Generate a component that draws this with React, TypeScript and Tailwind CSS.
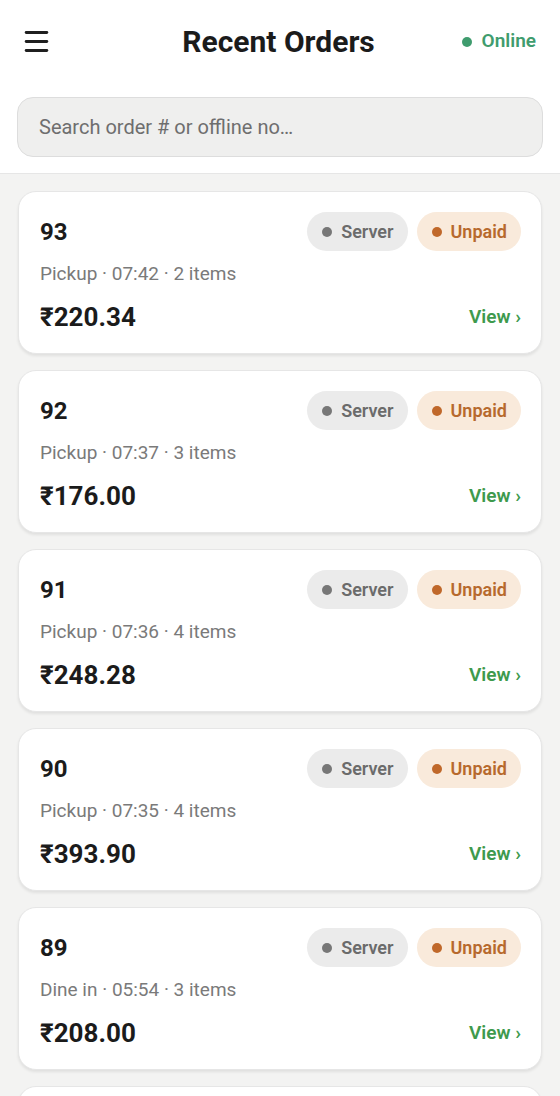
import { Menu } from 'lucide-react';

type Order = {
  id: number;
  kind: string;
  time: string;
  items: number;
  total: string;
};

const orders: Order[] = [
  { id: 93, kind: 'Pickup', time: '07:42', items: 2, total: '220.34' },
  { id: 92, kind: 'Pickup', time: '07:37', items: 3, total: '176.00' },
  { id: 91, kind: 'Pickup', time: '07:36', items: 4, total: '248.28' },
  { id: 90, kind: 'Pickup', time: '07:35', items: 4, total: '393.90' },
  { id: 89, kind: 'Dine in', time: '05:54', items: 3, total: '208.00' },
  { id: 88, kind: 'Dine in', time: '05:41', items: 2, total: '142.00' },
];

function Pill({ label, tone }: { label: string; tone: 'server' | 'unpaid' }) {
  const isServer = tone === 'server';
  return (
    <span
      className={`flex h-[39px] items-center gap-[9px] rounded-full pl-[15px] pr-[14px] text-[18px] font-semibold ${
        isServer ? 'bg-[#ebebeb] text-[#6b6b6b]' : 'bg-[#f9eadb] text-[#b7692d]'
      }`}
    >
      <span className={`h-[10px] w-[10px] rounded-full ${isServer ? 'bg-[#777777]' : 'bg-[#c0682a]'}`} />
      {label}
    </span>
  );
}

function OrderCard({ order }: { order: Order }) {
  return (
    <div className="h-[163px] shrink-0 rounded-[18px] border border-[#e6e6e6] bg-white pl-[21px] pr-[20px] pt-[20px] shadow-[0_2px_3px_rgba(0,0,0,0.08)]">
      <div className="flex items-center justify-between">
        <span className="text-[24px] font-bold text-[#1b1b1b]">{order.id}</span>
        <div className="flex items-center gap-[9px]">
          <Pill label="Server" tone="server" />
          <Pill label="Unpaid" tone="unpaid" />
        </div>
      </div>
      <p className="mt-[11px] text-[19px] leading-[24px] text-[#7a7a7a]">
        {order.kind} · {order.time} · {order.items} items
      </p>
      <div className="mt-[15px] flex items-center justify-between">
        <span className="text-[26px] font-bold leading-[32px] text-[#1b1b1b]">₹{order.total}</span>
        <span className="text-[19px] font-semibold text-[#3e9a4d]">View ›</span>
      </div>
    </div>
  );
}

export default function App() {
  return (
    <div className="flex h-[1096px] w-[560px] flex-col overflow-hidden bg-[#f3f3f2] font-['Roboto',sans-serif]">
      <div className="shrink-0 border-b border-[#e6e6e6] bg-white">
        <div className="grid h-[83px] grid-cols-[1fr_auto_1fr] items-center pl-[21px] pr-[24px]">
          <Menu className="h-[31px] w-[31px] text-[#1f1f1f]" strokeWidth={2.2} />
          <h1 className="text-[30px] font-bold text-[#1b1b1b]">Recent Orders</h1>
          <div className="flex items-center justify-end gap-[10px]">
            <span className="h-[10px] w-[10px] rounded-full bg-[#3f9c6e]" />
            <span className="text-[19px] font-semibold text-[#3f9c6e]">Online</span>
          </div>
        </div>
        <div className="px-[17px] pb-[16px] pt-[14px]">
          <div className="flex h-[60px] items-center rounded-[16px] border border-[#dddddd] bg-[#efefee] px-[21px] text-[20px] text-[#6e6e6e]">
            Search order # or offline no…
          </div>
        </div>
      </div>
      <div className="flex flex-col gap-[16px] px-[18px] pt-[17px]">
        {orders.map((o) => (
          <OrderCard key={o.id} order={o} />
        ))}
      </div>
    </div>
  );
}
